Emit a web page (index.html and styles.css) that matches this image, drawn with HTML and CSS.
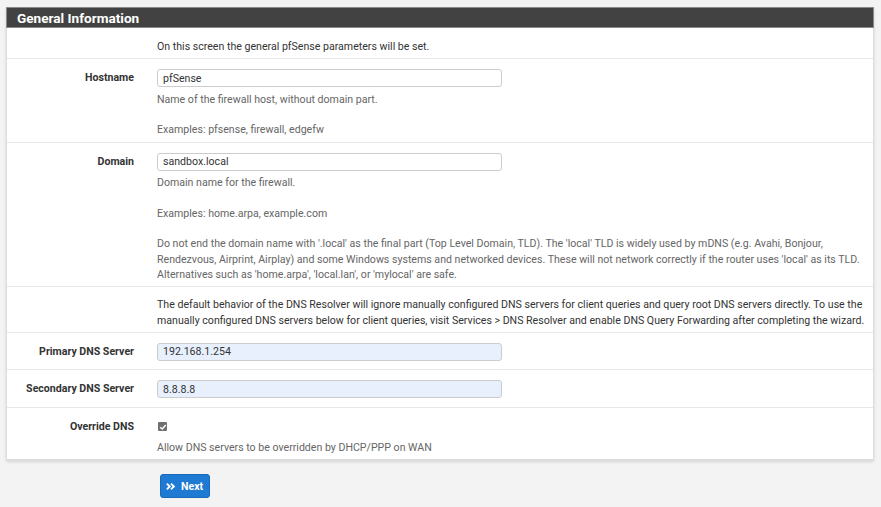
FILE: index.html
```html
<!DOCTYPE html>
<html lang="en">
<head>
  <meta charset="UTF-8" />
  <title>pfSense Setup Wizard</title>
  <link rel="stylesheet" href="styles.css">
</head>
<body>
  <div class="panel">
    <div class="panel-heading">General Information</div>

    <div class="form-row">
      <div class="form-label"></div>
      <div class="form-field">
        <div class="text">On this screen the general pfSense parameters will be set.</div>
      </div>
    </div>

    <div class="form-row">
      <div class="form-label">Hostname</div>
      <div class="form-field">
        <input class="text-input" type="text" value="pfSense" />
        <div class="help">Name of the firewall host, without domain part.<br><br>Examples: pfsense, firewall, edgefw</div>
      </div>
    </div>

    <div class="form-row">
      <div class="form-label">Domain</div>
      <div class="form-field">
        <input class="text-input" type="text" value="sandbox.local" />
        <div class="help">Domain name for the firewall.<br><br>Examples: home.arpa, example.com<br><br>Do not end the domain name with '.local' as the final part (Top Level Domain, TLD). The 'local' TLD is widely used by mDNS (e.g. Avahi, Bonjour, Rendezvous, Airprint, Airplay) and some Windows systems and networked devices. These will not network correctly if the router uses 'local' as its TLD. Alternatives such as 'home.arpa', 'local.lan', or 'mylocal' are safe.</div>
      </div>
    </div>

    <div class="form-row">
      <div class="form-label"></div>
      <div class="form-field">
        <div class="text">The default behavior of the DNS Resolver will ignore manually configured DNS servers for client queries and query root DNS servers directly. To use the manually configured DNS servers below for client queries, visit Services &gt; DNS Resolver and enable DNS Query Forwarding after completing the wizard.</div>
      </div>
    </div>

    <div class="form-row">
      <div class="form-label">Primary DNS Server</div>
      <div class="form-field">
        <input class="text-input filled" type="text" value="192.168.1.254" />
      </div>
    </div>

    <div class="form-row">
      <div class="form-label">Secondary DNS Server</div>
      <div class="form-field">
        <input class="text-input filled" type="text" value="8.8.8.8" />
      </div>
    </div>

    <div class="form-row">
      <div class="form-label">Override DNS</div>
      <div class="form-field">
        <div class="check-line">
          <span class="checkbox">
            <svg viewBox="0 0 10 10" width="8" height="8"><path d="M1.5 5.2 L4 7.5 L8.5 2.5" fill="none" stroke="#fff" stroke-width="1.8"/></svg>
          </span>
        </div>
        <div class="help">Allow DNS servers to be overridden by DHCP/PPP on WAN</div>
      </div>
    </div>
  </div>

  <div class="actions">
    <button class="btn-next">
      <svg viewBox="0 0 12 10" width="10" height="9"><path d="M1 1.5 L4.5 5 L1 8.5 M6 1.5 L9.5 5 L6 8.5" fill="none" stroke="#fff" stroke-width="2.2"/></svg>
      Next
    </button>
  </div>
</body>
</html>
```

FILE: styles.css
```css
* {
  box-sizing: border-box;
}

html, body {
  margin: 0;
  padding: 0;
}

body {
  background: #f3f3f3;
  font-family: Roboto, 'Liberation Sans', sans-serif;
  font-size: 10.6px;
  color: #333;
  padding: 7px 7px 0 6px;
  height: 507px;
  overflow: hidden;
}

.panel {
  background: #fff;
  border: 1px solid #ddd;
  border-top: none;
  box-shadow: 0 2px 3px rgba(0, 0, 0, 0.12);
}

.panel-heading {
  background: #424242;
  color: #fff;
  font-weight: 700;
  font-size: 13.6px;
  height: 21px;
  line-height: 21px;
  padding-left: 10px;
  border: 1px solid #8a8a8a;
  margin: 0 -1px;
}

.form-row {
  display: grid;
  grid-template-columns: 150px 1fr;
  border-top: 1px solid #e8e8e8;
  padding: 10px 0 4px;
}

.panel-heading + .form-row {
  border-top: none;
  padding-top: 11px;
}

.form-label {
  text-align: right;
  font-weight: 700;
  padding-right: 23px;
  line-height: 17px;
  color: #333;
}

.form-field {
  padding-right: 0;
}

.text {
  line-height: 15.3px;
  color: #333;
}

.text-input {
  display: block;
  width: 345px;
  height: 18px;
  border: 1px solid #ccc;
  border-radius: 3px;
  padding: 0 5px;
  font-family: inherit;
  font-size: 10.6px;
  color: #333;
  background: #fff;
  margin: 0 0 4.5px;
}

.text-input.filled {
  background: #e8f0fe;
}

.help {
  color: #666;
  line-height: 15.3px;
}

.check-line {
  height: 18px;
  display: flex;
  align-items: center;
}

.checkbox {
  display: inline-flex;
  align-items: center;
  justify-content: center;
  width: 9px;
  height: 9px;
  background: #707070;
  border-radius: 1px;
  margin-left: 1px;
}

.check-line + .help {
  margin-top: 4px;
}

.actions {
  padding: 14px 0 0 154px;
}

.btn-next {
  display: inline-flex;
  align-items: center;
  gap: 5px;
  background: #1e7ad2;
  color: #fff;
  border: 1px solid #1a6ab8;
  border-radius: 3px;
  font-family: inherit;
  font-weight: 700;
  font-size: 10.6px;
  height: 24px;
  padding: 0 6px 0 5px;
  cursor: pointer;
}
```
